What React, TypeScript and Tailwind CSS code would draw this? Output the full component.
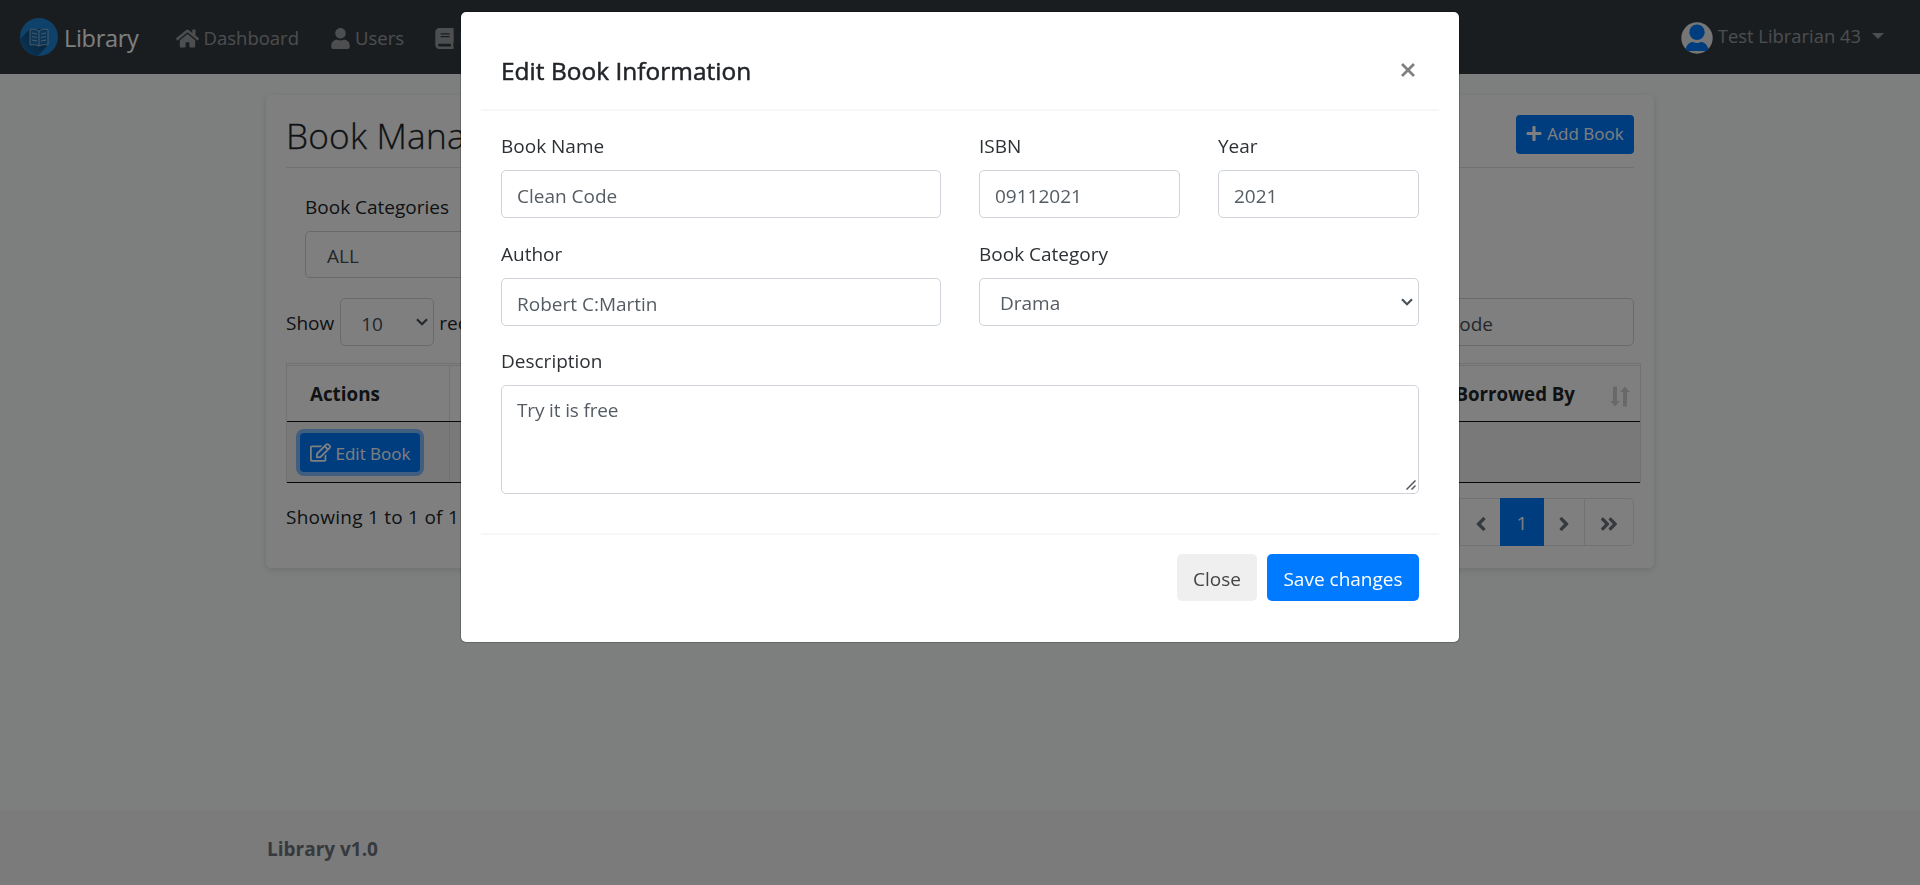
import React from "react";
import {
  FaHome,
  FaUser,
  FaBook,
  FaPlus,
  FaRegEdit,
  FaAngleLeft,
  FaAngleRight,
  FaAngleDoubleLeft,
  FaAngleDoubleRight,
} from "react-icons/fa";

function LogoMark() {
  return (
    <svg viewBox="0 0 38 38" className="h-[38px] w-[38px] shrink-0">
      <defs>
        <clipPath id="disc">
          <circle cx="19" cy="19" r="19" />
        </clipPath>
        <linearGradient id="shade" x1="1" y1="0" x2="0" y2="1">
          <stop offset="0.3" stopColor="#0f4c80" />
          <stop offset="0.9" stopColor="#1a78c2" />
        </linearGradient>
      </defs>
      <g clipPath="url(#disc)">
        <rect width="38" height="38" fill="#1c84d4" />
        <path d="M10 11 L-6 27 L12 44 L28 27 L28 11 Z" fill="url(#shade)" />
        <path d="M10 11.500 C13 11 16 11 19 13 C22 11 25 11 28 11.500 V27 C25 26.500 22 26.500 19 28 C16 26.500 13 26.500 10 27 Z" fill="#1c6fae" />
      </g>
      <g fill="none" stroke="#a9c9e4" strokeWidth="0.800">
        <path d="M19 13 C16 11 13 11 10 11.500 V27 C13 26.500 16 26.500 19 28 C22 26.500 25 26.500 28 27 V11.500 C25 11 22 11 19 13 V28" />
        <path d="M12 15 l5 1 M12 18.500 l5 1 M12 22 l5 1 M26 15 l-5 1 M26 18.500 l-5 1 M26 22 l-5 1" />
      </g>
    </svg>
  );
}

function Avatar() {
  return (
    <svg viewBox="0 0 32 32" className="h-8 w-8 shrink-0">
      <circle cx="16" cy="16" r="15.700" fill="#ececec" />
      <circle cx="16" cy="10.300" r="7.700" fill="#007bff" />
      <path d="M4.500 27 C6 22.500 9 20 12 20 C14.500 21.200 17.500 21.200 20 20 C23 20 26 22.500 27.500 27 L25.500 29 H6.500 Z" fill="#007bff" />
    </svg>
  );
}

function Chevron() {
  return (
    <svg viewBox="0 0 12 8" className="h-2 w-3 shrink-0" fill="none" stroke="#495057" strokeWidth="2.200">
      <path d="M1 1.200 L6 6.200 L11 1.200" />
    </svg>
  );
}

function SortArrows() {
  return (
    <svg viewBox="0 0 20 21" className="h-[21px] w-5 shrink-0" fill="#d3d3d3">
      <path d="M3 0.500 h4 v14.500 h3 l-5 5.500 l-5 -5.500 h3 Z" />
      <path d="M13 20.500 h4 v-14.500 h3 l-5 -5.500 l-5 5.500 h3 Z" />
    </svg>
  );
}

function NavBar() {
  return (
    <nav className="flex h-[74px] items-center bg-[#343a40] text-[18.5px] text-white/50">
      <div className="flex items-center pl-5">
        <LogoMark />
        <span className="pl-[6px] pt-0.5 text-[23.5px] leading-[38px] tracking-[-0.3px] text-white">Library</span>
      </div>
      <div className="flex items-center pl-[37px] pt-0.5">
        <FaHome className="h-[21px] w-[23px]" />
        <span className="pl-[5px]">Dashboard</span>
      </div>
      <div className="flex items-center pl-[32px] pt-0.5">
        <FaUser className="h-[21px] w-[19px]" />
        <span className="pl-[5px]">Users</span>
      </div>
      <div className="flex items-center pl-[31px] pt-0.5">
        <FaBook className="h-[21px] w-[19px]" />
        <span className="pl-[5px]">Books</span>
      </div>
      <div className="ml-auto flex items-center pr-9">
        <span className="pt-0.5">
          <Avatar />
        </span>
        <span className="pb-0.5 pl-[5px] text-[18.4px]">Test Librarian 43</span>
        <svg viewBox="0 0 12 6" className="mb-[3px] ml-[11px] h-1.5 w-3" fill="currentColor">
          <path d="M0 0 H12 L6 6 Z" />
        </svg>
      </div>
    </nav>
  );
}

function BookTable() {
  return (
    <div className="mt-[17px] w-[1355px] border-x border-t border-[#dee2e6] pt-px">
      <div className="flex h-14 border-t border-[#dee2e6] font-bold text-[#212529]">
        <div className="flex w-[163px] items-center border-r border-[#dee2e6] pl-[23px] pt-0.5 text-[18.8px]">Actions</div>
        <div className="flex flex-1 items-center justify-end pr-[10px] pt-0.5 text-[18.7px]">
          <span>Borrowed By</span>
          <span className="pl-[35px] pt-[3px]">
            <SortArrows />
          </span>
        </div>
      </div>
      <div className="flex h-[62px] border-y border-[#111111] bg-[#f2f2f2]">
        <div className="flex w-[163px] items-center border-r border-[#dee2e6] pl-[13px] pt-px">
          <button className="flex h-[39px] w-[120px] items-center justify-center gap-[5px] rounded-[4px] bg-[#007bff] text-[17px] text-white ring-4 ring-[#80bdff]">
            <FaRegEdit className="h-[19px] w-[21px]" />
            <span className="whitespace-nowrap pt-0.5">Edit Book</span>
          </button>
        </div>
      </div>
    </div>
  );
}

function Pagination() {
  return (
    <div className="flex h-12 text-[19px] text-[#6c757d]">
      <div className="flex w-[50px] items-center justify-center rounded-l-[5px] border border-[#dee2e6]">
        <FaAngleDoubleLeft className="h-[21px] w-[18px]" />
      </div>
      <div className="flex w-10 items-center justify-center border-y border-[#dee2e6] pl-px pt-[3px]">
        <FaAngleLeft className="h-[22px] w-[14px]" />
      </div>
      <div className="flex w-11 items-center justify-center bg-[#007bff] pt-[3px] text-white">1</div>
      <div className="flex w-[41px] items-center justify-center border-y border-r border-[#dee2e6] pt-[3px]">
        <FaAngleRight className="h-[22px] w-[14px]" />
      </div>
      <div className="flex w-[49px] items-center justify-center rounded-r-[5px] border-y border-r border-[#dee2e6] pt-[3px]">
        <FaAngleDoubleRight className="h-[22px] w-[18px]" />
      </div>
    </div>
  );
}

function BookPanel() {
  return (
    <section className="mx-auto mt-[21px] h-[473px] w-[1388px] rounded-[5px] bg-white px-5 pt-5 text-[#212529] shadow-[0_2px_6px_rgba(0,0,0,0.12)]">
      <div className="flex h-[53px] items-start justify-between border-b border-[#e5e5e5]">
        <h1 className="text-[35.2px] font-light leading-[40px] tracking-[0.2px] [-webkit-text-stroke:0.3px_#212529]">
          Book Management
        </h1>
        <button className="flex h-[39px] w-[118px] items-center justify-center gap-[5px] rounded-[4px] bg-[#007bff] pb-0.5 text-[17px] text-white">
          <FaPlus className="h-[17px] w-[16px]" />
          <span className="whitespace-nowrap">Add Book</span>
        </button>
      </div>
      <div className="pl-[19px] pt-6">
        <div className="leading-[30px]">Book Categories</div>
        <div className="mt-[9px] flex h-[47px] w-[420px] items-center justify-between rounded-[5px] border border-[#ced4da] px-[21px] pt-[3px] text-[#495057]">
          ALL
          <Chevron />
        </div>
      </div>
      <div className="mt-5 flex h-12 items-center">
        <span className="pt-0.5">Show</span>
        <div className="ml-[6px] flex h-12 w-[94px] items-center justify-between rounded-[5px] border border-[#ced4da] pl-5 pr-[5px] text-[#495057]">
          <span className="pt-1">10</span>
          <Chevron />
        </div>
        <span className="pl-[5px] pt-0.5">records per page</span>
        <div className="ml-auto flex h-12 w-[260px] items-center rounded-[5px] border border-[#ced4da] pl-[17px] pt-1 text-[#495057]">
          <span className="w-[101px] text-right">Clean Code</span>
        </div>
      </div>
      <BookTable />
      <div className="flex items-start justify-between pt-[15px]">
        <span className="pt-1 leading-[30px] tracking-[0.25px]">Showing 1 to 1 of 1 records</span>
        <Pagination />
      </div>
    </section>
  );
}

const field =
  "block h-12 w-full rounded-[5px] border border-[#ced4da] bg-white px-[15px] pt-[3px] text-[#555c63] outline-none";

function Field({ label, value }: { label: string; value: string }) {
  return (
    <label className="block">
      <span className="block pb-[9px] leading-[30px]">{label}</span>
      <input className={field} defaultValue={value} />
    </label>
  );
}

function EditDialog() {
  return (
    <div className="fixed inset-0 flex items-start justify-center bg-black/50 pt-[11px]">
      <div className="h-[632px] w-[1000px] rounded-[6px] border border-black/20 bg-white bg-clip-padding p-5 text-[#2d3135]">
        <header className="flex h-[79px] items-start justify-between border-b-2 border-[#f7f7f7] px-5 pt-5">
          <h5 className="text-[24.4px] leading-[38px] tracking-[0.05px] text-[#212529] [-webkit-text-stroke:0.5px_#212529]">
            Edit Book Information
          </h5>
          <svg viewBox="0 0 14 14" className="mr-[4px] mt-[11px] h-[14px] w-[14px]" stroke="#808080" strokeWidth="2.800">
            <path d="M1 1 L13 13 M13 1 L1 13" />
          </svg>
        </header>
        <div className="h-[422px] px-5 pt-5">
          <div className="grid grid-cols-[440px_201px_201px] gap-x-[38px]">
            <Field label="Book Name" value="Clean Code" />
            <Field label="ISBN" value="09112021" />
            <Field label="Year" value="2021" />
          </div>
          <div className="mt-[21px] grid grid-cols-[440px_440px] gap-x-[38px]">
            <Field label="Author" value="Robert C:Martin" />
            <div>
              <div className="pb-[9px] leading-[30px]">Book Category</div>
              <div className="flex h-12 items-center justify-between rounded-[5px] border border-[#ced4da] pl-5 pr-[5px] text-[#555c63]">
                <span className="pt-[3px]">Drama</span>
                <Chevron />
              </div>
            </div>
          </div>
          <label className="mt-5 block">
            <span className="block pb-[9px] leading-[30px]">Description</span>
            <span className="relative block">
              <textarea
                className="block h-[109px] w-full resize-none rounded-[5px] border border-[#ced4da] px-[15px] pt-[9px] leading-[30px] tracking-[-0.15px] text-[#555c63] outline-none"
                defaultValue="Try it is free"
              />
              <svg viewBox="0 0 10 10" className="absolute bottom-1 right-[3px] h-2.5 w-2.5" stroke="#555555" strokeWidth="1.500">
                <path d="M0.500 9.500 L9.500 0.500 M5.500 9.500 L9.500 5.500" />
              </svg>
            </span>
          </label>
        </div>
        <footer className="flex justify-end gap-[10px] border-t-2 border-[#f7f7f7] px-5 pt-[19px]">
          <button className="h-[47px] w-20 rounded-[5px] bg-[#efefef] pt-[3px] text-[#444444]">Close</button>
          <button className="h-[47px] w-[152px] rounded-[5px] bg-[#007bff] pt-[3px] text-white">Save changes</button>
        </footer>
      </div>
    </div>
  );
}

export default function App() {
  return (
    <div className="flex h-[885px] flex-col overflow-hidden bg-[#f8fefa] font-['Open_Sans','Noto_Sans',sans-serif] text-[19px]">
      <NavBar />
      <BookPanel />
      <footer className="mt-auto flex h-[75px] items-center bg-[#f6f6f6] pb-px pl-[267px] pt-1 font-bold text-[#6c757d]">
        Library v1.0
      </footer>
      <EditDialog />
    </div>
  );
}
